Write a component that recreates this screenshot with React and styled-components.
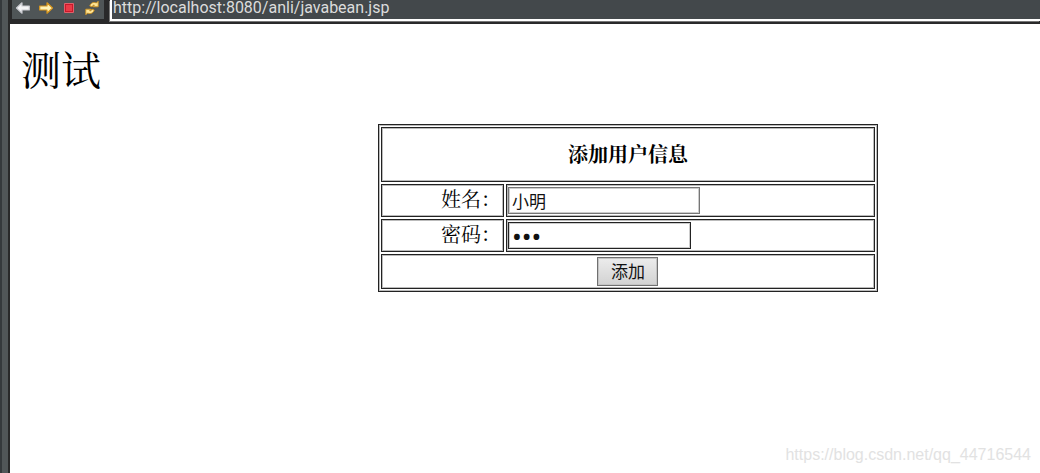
import React, { useState } from 'react';
import styled, { createGlobalStyle } from 'styled-components';

const App = () => {
  const [name, setName] = useState('小明');
  const [password, setPassword] = useState('123');

  return (
    <StyledWindow>
      <GlobalStyle />
      <StyledSash />
      <StyledBrowser>
        <StyledToolbar>
          <StyledNavigation>
            <StyledIconButton aria-label="Back">
              <ArrowIcon fill="#f4f4f6" stroke="#c9cad0" />
            </StyledIconButton>
            <StyledIconButton aria-label="Forward">
              <ArrowIcon fill="#fff3b8" stroke="#d8961c" flipped />
            </StyledIconButton>
            <StyledIconButton aria-label="Stop">
              <StopIcon />
            </StyledIconButton>
            <StyledIconButton aria-label="Refresh">
              <RefreshIcon />
            </StyledIconButton>
          </StyledNavigation>
          <StyledAddress
            aria-label="Address"
            defaultValue="http://localhost:8080/anli/javabean.jsp"
            spellCheck={false}
          />
        </StyledToolbar>
        <StyledPage>
          <StyledTitle>测试</StyledTitle>
          <StyledForm onSubmit={(e) => e.preventDefault()}>
            <StyledTable>
              <colgroup>
                <StyledLabelColumn />
                <col />
              </colgroup>
              <tbody>
                <StyledRow $height={55}>
                  <StyledHeading colSpan={2}>添加用户信息</StyledHeading>
                </StyledRow>
                <StyledRow $height={33}>
                  <StyledLabelCell>
                    <label htmlFor="name">姓名：</label>
                  </StyledLabelCell>
                  <StyledCell>
                    <StyledInput
                      id="name"
                      type="text"
                      value={name}
                      onChange={(e) => setName(e.target.value)}
                    />
                  </StyledCell>
                </StyledRow>
                <StyledRow $height={33}>
                  <StyledLabelCell>
                    <label htmlFor="password">密码：</label>
                  </StyledLabelCell>
                  <StyledCell>
                    <StyledPassword
                      id="password"
                      type="password"
                      value={password}
                      onChange={(e) => setPassword(e.target.value)}
                    />
                  </StyledCell>
                </StyledRow>
                <StyledRow $height={35}>
                  <StyledActionCell colSpan={2}>
                    <StyledSubmit type="submit">添加</StyledSubmit>
                  </StyledActionCell>
                </StyledRow>
              </tbody>
            </StyledTable>
          </StyledForm>
        </StyledPage>
      </StyledBrowser>
      <StyledWatermark>https://blog.csdn.net/qq_44716544</StyledWatermark>
    </StyledWindow>
  );
};

const ArrowIcon = ({ fill, stroke, flipped }) => (
  <svg width="16" height="16" viewBox="0 0 16 16">
    <path
      d="M1.5 8 L7 2.8 V6 H14.3 V10 H7 V13.2 Z"
      transform={flipped ? 'matrix(-1 0 0 1 16 0)' : undefined}
      fill={fill}
      stroke={stroke}
      strokeWidth="1.2"
      strokeLinejoin="round"
    />
  </svg>
);

const StopIcon = () => (
  <svg width="16" height="16" viewBox="0 0 16 16">
    <rect x="3" y="3" width="10" height="10" rx="1" fill="#e0606a" />
    <rect x="4" y="4" width="8" height="8" fill="#c9182a" />
    <rect x="5" y="5" width="6" height="6" fill="#ea3a46" />
  </svg>
);

const RefreshIcon = () => (
  <svg width="16" height="16" viewBox="0 0 16 16">
    <g fill="#ffe596" stroke="#cf931f" strokeWidth="0.9" strokeLinejoin="round">
      <path d="M14.2 1.2 V6.8 H8.8 L10.4 5.2 C9.2 4.9 8.6 5.6 8 6.8 L5.8 6 C6.6 3 9.4 1.6 12.4 3 Z" />
      <path
        d="M14.2 1.2 V6.8 H8.8 L10.4 5.2 C9.2 4.9 8.6 5.6 8 6.8 L5.8 6 C6.6 3 9.4 1.6 12.4 3 Z"
        transform="rotate(180 8 8)"
      />
    </g>
  </svg>
);

const GlobalStyle = createGlobalStyle`
  body {
    margin: 0;
    background: #fff;
  }
  *, *::before, *::after {
    box-sizing: border-box;
  }
`;

const serif = `'Liberation Serif', SimSun, 'Noto Serif CJK SC', 'Noto Sans CJK SC', serif`;
const sans = `Roboto, 'Noto Sans CJK SC', sans-serif`;

const StyledWindow = styled.div`
  display: flex;
  min-height: 100vh;
  position: relative;
`;

const StyledSash = styled.div`
  flex: none;
  width: 10px;
  background: #515658;
  border-left: 2px solid #35393c;
  border-right: 2px solid #29292a;
`;

const StyledBrowser = styled.div`
  flex: 1;
  min-width: 0;
`;

const StyledToolbar = styled.div`
  display: flex;
  gap: 6px;
  height: 24px;
  padding: 0 0 2px 2px;
  background: #29292a;
`;

const StyledNavigation = styled.div`
  display: flex;
  align-items: flex-start;
  gap: 7px;
  width: 92px;
  height: 19px;
  padding-left: 3px;
  background: #4f5557;
`;

const StyledIconButton = styled.button`
  width: 16px;
  height: 16px;
  padding: 0;
  border: 0;
  background: none;

  svg {
    display: block;
  }
`;

const StyledAddress = styled.input`
  flex: 1;
  min-width: 0;
  height: 21px;
  padding: 0 0 4px 1px;
  border: solid #fff;
  border-width: 0 0 2px 2px;
  outline: 0;
  box-shadow: -1px 1px 0 #777;
  background: #43484b;
  color: #dcdcdc;
  font: 16px/15px ${sans};
`;

const StyledPage = styled.main`
  padding: 18px 0 0 11px;
  color: #000;
  font-family: ${serif};
`;

const StyledTitle = styled.h1`
  margin: 0;
  font-size: 40px;
  font-weight: 400;
  line-height: 60px;
`;

const StyledForm = styled.form`
  margin: 22px 0 0 -9px;
  padding-left: 20%;
`;

const StyledTable = styled.table`
  width: 500px;
  max-width: 100%;
  margin: 0 auto;
  table-layout: fixed;
  border: 1px solid #222;
  border-spacing: 2px;
  box-shadow: inset 0 0 0 1px #bbb;
  font-size: 20px;
  line-height: 24px;
`;

const StyledLabelColumn = styled.col`
  width: 123px;
`;

const StyledRow = styled.tr`
  height: ${(props) => props.$height}px;
`;

const StyledCell = styled.td`
  padding: 1px;
  border: 1px solid #222;
  box-shadow: inset 0 0 0 1px #bbb;
`;

const StyledHeading = styled(StyledCell).attrs({ as: 'th' })`
  font-weight: 700;
`;

const StyledLabelCell = styled(StyledCell)`
  padding: 1px 2px 2px 1px;
  text-align: right;
`;

const StyledActionCell = styled(StyledCell)`
  text-align: center;
`;

const StyledInput = styled.input`
  display: block;
  width: 192px;
  height: 27px;
  padding: 0 3px;
  border: 1px solid #767676;
  border-radius: 0;
  outline: 0;
  box-shadow: inset 0 0 0 1px #ccc;
  background: #fff;
  color: #111;
  font: 17px/24px ${sans};
`;

const StyledPassword = styled(StyledInput)`
  width: 183px;
  border-color: #222;
  font-family: 'Noto Sans', sans-serif;
  font-size: 26px;
`;

const StyledSubmit = styled.button`
  display: block;
  width: 61px;
  height: 29px;
  margin: 0 auto;
  padding: 0;
  border: 1px solid #707070;
  border-radius: 0;
  box-shadow: inset 0 0 0 1px #c4c4c4;
  background: linear-gradient(#ececec, #d2d2d2);
  color: #111;
  font: 17px/24px ${sans};
`;

const StyledWatermark = styled.span`
  position: absolute;
  right: 9px;
  bottom: 8px;
  color: #e2e2e2;
  font: 16px/20px 'Liberation Sans', Arial, sans-serif;
`;

export default App;
